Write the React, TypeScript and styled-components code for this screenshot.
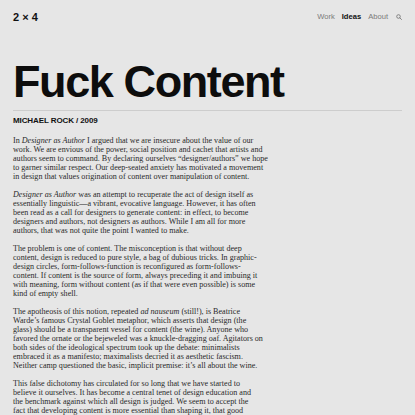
import React from 'react';
import styled, { createGlobalStyle } from 'styled-components';

const GlobalStyle = createGlobalStyle`
  html, body {
    margin: 0;
    padding: 0;
    background: #e6e6e6;
  }
  body {
    font-family: "Liberation Sans", Arial, sans-serif;
    color: #111;
  }
`;

const Page = styled.div`
  padding: 0 13px;
  box-sizing: border-box;
  width: 415px;
`;

const Header = styled.header`
  display: flex;
  align-items: center;
  justify-content: space-between;
  height: 34px;
`;

const Logo = styled.a`
  font-size: 11px;
  font-weight: 700;
  line-height: 11px;
  color: #111;
  text-decoration: none;
`;

const Nav = styled.nav`
  display: flex;
  align-items: center;
  gap: 7px;
  margin-top: -1px;
`;

const NavLink = styled.a<{ $active?: boolean }>`
  font-size: 7.6px;
  line-height: 8px;
  font-weight: ${p => (p.$active ? 700 : 400)};
  color: ${p => (p.$active ? '#111' : '#7a7a7a')};
  text-decoration: none;
`;

const SearchButton = styled.span`
  display: flex;
  margin-left: 1px;
  color: #7a7a7a;
`;

const Title = styled.h1`
  margin: 25px 0 6px;
  font-size: 45px;
  line-height: 45px;
  font-weight: 700;
  letter-spacing: -1.4px;
  color: #0d0d0d;
`;

const Rule = styled.hr`
  margin: 0;
  border: 0;
  border-top: 1px solid #cdcdcd;
`;

const Byline = styled.div`
  margin: 6px 0 0;
  font-size: 8px;
  line-height: 8px;
  font-weight: 700;
  text-transform: uppercase;
  letter-spacing: -0.1px;
  color: #111;
`;

const Body = styled.article`
  margin-top: 11px;
  font-family: "Liberation Serif", "Times New Roman", serif;
  font-size: 8.1px;
  line-height: 9px;
  color: #2a2a2a;
`;

const Para = styled.p`
  margin: 0 0 9px;
`;

// the article is set with the same breaks as the original page
const Line = styled.span`
  display: block;
  white-space: nowrap;
`;

const SearchIcon = () => (
  <svg width="6" height="6" viewBox="0 0 12 12" fill="none" stroke="currentColor" strokeWidth="1.8">
    <circle cx="5" cy="5" r="3.6" />
    <path d="M7.7 7.7 L11 11" strokeLinecap="round" />
  </svg>
);

const paragraphs: React.ReactNode[][] = [
  [
    <>In <em>Designer as Author</em> I argued that we are insecure about the value of our</>,
    'work. We are envious of the power, social position and cachet that artists and',
    'authors seem to command. By declaring ourselves “designer/authors” we hope',
    'to garner similar respect. Our deep-seated anxiety has motivated a movement',
    'in design that values origination of content over manipulation of content.',
  ],
  [
    <><em>Designer as Author</em> was an attempt to recuperate the act of design itself as</>,
    'essentially linguistic—a vibrant, evocative language. However, it has often',
    'been read as a call for designers to generate content: in effect, to become',
    'designers and authors, not designers as authors. While I am all for more',
    'authors, that was not quite the point I wanted to make.',
  ],
  [
    'The problem is one of content. The misconception is that without deep',
    'content, design is reduced to pure style, a bag of dubious tricks. In graphic-',
    'design circles, form-follows-function is reconfigured as form-follows-',
    'content. If content is the source of form, always preceding it and imbuing it',
    'with meaning, form without content (as if that were even possible) is some',
    'kind of empty shell.',
  ],
  [
    <>The apotheosis of this notion, repeated <em>ad nauseum</em> (still!), is Beatrice</>,
    'Warde’s famous Crystal Goblet metaphor, which asserts that design (the',
    'glass) should be a transparent vessel for content (the wine). Anyone who',
    'favored the ornate or the bejeweled was a knuckle-dragging oaf. Agitators on',
    'both sides of the ideological spectrum took up the debate: minimalists',
    'embraced it as a manifesto; maximalists decried it as aesthetic fascism.',
    'Neither camp questioned the basic, implicit premise: it’s all about the wine.',
  ],
  [
    'This false dichotomy has circulated for so long that we have started to',
    'believe it ourselves. It has become a central tenet of design education and',
    'the benchmark against which all design is judged. We seem to accept the',
    'fact that developing content is more essential than shaping it, that good',
    'design is the product of good content and that form is merely its servant.',
  ],
];

export default function App() {
  return (
    <>
      <GlobalStyle />
      <Page>
        <Header>
          <Logo href="#">2 × 4</Logo>
          <Nav>
            <NavLink href="#">Work</NavLink>
            <NavLink href="#" $active>Ideas</NavLink>
            <NavLink href="#">About</NavLink>
            <SearchButton>
              <SearchIcon />
            </SearchButton>
          </Nav>
        </Header>

        <Title>Fuck Content</Title>
        <Rule />
        <Byline>Michael Rock / 2009</Byline>

        <Body>
          {paragraphs.map((lines, i) => (
            <Para key={i}>
              {lines.map((line, j) => (
                <Line key={j}>{line}</Line>
              ))}
            </Para>
          ))}
        </Body>
      </Page>
    </>
  );
}
